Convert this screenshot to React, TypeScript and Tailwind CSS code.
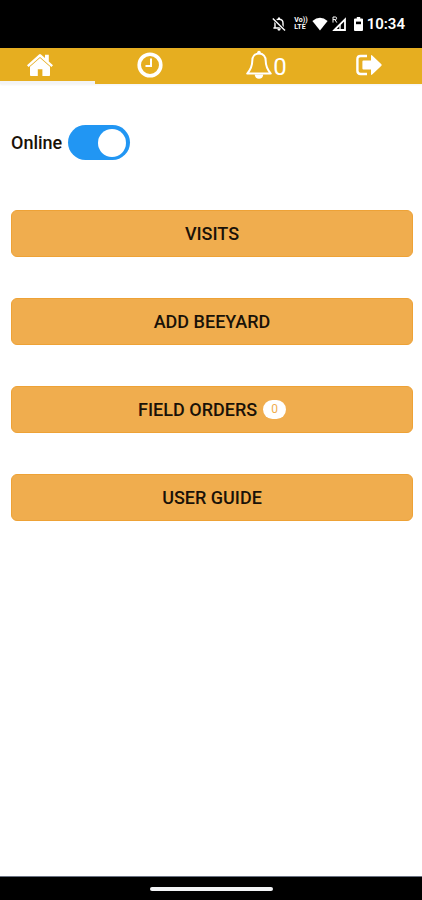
import React from "react";

type Tab = {
  label: string;
  icon: React.ReactNode;
  count?: number;
  className?: string;
};

type Action = {
  title: string;
  count?: number;
};

const HomeIcon = () => (
  <svg viewBox="0 0 26 24" className="w-[26px] h-6 fill-current">
    <path d="M12 1.4 Q13 0.4 14 1.4 L18 5 V1.8 H21.8 V8.4 L26 12.2 L24.4 14 L13 3.9 L1.6 14 L0 12.2 Z" />
    <path d="M13 5 L23 13.8 V22.2 Q23 23 22.2 23 H15.4 V16.2 H10.8 V23 H3.9 Q3 23 3 22.2 V13.8 Z" />
  </svg>
);

const ClockIcon = () => (
  <svg viewBox="0 0 26 26" className="size-[26px] fill-none stroke-current">
    <circle cx="13" cy="13" r="10.8" strokeWidth="3.6" />
    <path d="M14 6.5 V13.9 H8.5" strokeWidth="2" />
  </svg>
);

const BellIcon = () => (
  <svg viewBox="0 0 28 30" className="w-7 h-[30px]">
    <path
      d="M14 3.6 C9.6 3.6 7.3 6.8 7.3 10.8 C7.3 17 5.2 20.2 2.2 23.6 H25.8 C22.8 20.2 20.7 17 20.7 10.8 C20.7 6.8 18.4 3.6 14 3.6 Z"
      fill="none"
      stroke="currentColor"
      strokeWidth="2"
      strokeLinejoin="round"
    />
    <circle cx="14" cy="2.6" r="1.8" fill="currentColor" />
    <path d="M9.8 24.4 H18.2 C18.2 27.2 16.4 28.8 14 28.8 C11.6 28.8 9.8 27.2 9.8 24.4 Z" fill="currentColor" />
  </svg>
);

const LogOutIcon = () => (
  <svg viewBox="0 0 26 24" className="w-[26px] h-6">
    <path
      d="M11 3 H4.6 Q1.4 3 1.4 6.2 V17.8 Q1.4 21 4.6 21 H11"
      fill="none"
      stroke="currentColor"
      strokeWidth="2.4"
    />
    <path
      d="M7.4 7.6 H15 V2.8 Q15 1.4 16.2 2.5 L25.4 11.3 Q26 12 25.4 12.7 L16.2 21.5 Q15 22.6 15 21.2 V16.4 H7.4 Q6.4 16.4 6.4 15.4 V8.6 Q6.4 7.6 7.4 7.6 Z"
      fill="currentColor"
    />
  </svg>
);

const tabs: Tab[] = [
  { label: "Home", icon: <HomeIcon />, className: "pr-4 border-gray-100" },
  { label: "History", icon: <ClockIcon />, className: "border-transparent" },
  {
    label: "Notifications",
    icon: <BellIcon />,
    count: 0,
    className: "border-transparent",
  },
  {
    label: "Log out",
    icon: <LogOutIcon />,
    className: "pr-3 border-transparent",
  },
];

const actions: Action[] = [
  { title: "Visits" },
  { title: "Add Beeyard" },
  { title: "Field Orders", count: 0 },
  { title: "User Guide" },
];

const App = () => {
  return (
    <div className="min-h-screen flex flex-col bg-white text-[#1a1208] font-[Roboto,sans-serif]">
      <StatusBar />
      <nav className="grid grid-cols-[95fr_109fr_124fr_94fr] h-9 bg-[#e6ae20] text-white shadow-xs">
        {tabs.map((tab) => (
          <button
            key={tab.label}
            aria-label={tab.label}
            className={`flex items-center justify-center border-b-3 ${tab.className}`}
          >
            {tab.icon}
            {tab.count !== undefined && (
              <span className="pt-1 text-2xl leading-7">{tab.count}</span>
            )}
          </button>
        ))}
      </nav>
      <main className="flex-1 pl-[11px] pr-[9px] pt-[41px]">
        <div className="flex items-center gap-[6px]">
          <label htmlFor="online" className="text-lg font-medium">
            Online
          </label>
          <input
            id="online"
            type="checkbox"
            defaultChecked
            className="appearance-none flex items-center w-[62px] h-[35px] px-1 rounded-full bg-gray-300 checked:justify-end checked:bg-[#2196f3] before:size-7 before:rounded-full before:bg-white"
          />
        </div>
        <div className="flex flex-col gap-[41px] pt-[50px]">
          {actions.map((action) => (
            <ActionButton key={action.title} action={action} />
          ))}
        </div>
      </main>
      <footer className="flex items-center justify-center h-6 bg-black border-t border-gray-500">
        <div className="w-[123px] h-1 rounded-full bg-gray-100" />
      </footer>
    </div>
  );
};

export default App;

const ActionButton = ({ action }: { action: Action }) => {
  return (
    <button className="flex items-center justify-center gap-[6px] w-full h-[47px] rounded-md border border-[#eea236] bg-[#f0ad4e] text-lg font-medium uppercase">
      {action.title}
      {action.count !== undefined && (
        <span className="px-2 rounded-full bg-white text-[#f0ad4e] text-xs leading-[19px] font-normal">
          {action.count}
        </span>
      )}
    </button>
  );
};

const StatusBar = () => {
  return (
    <header className="flex items-center justify-end h-12 pr-[17px] bg-black text-white">
      <svg viewBox="0 0 14 16" className="w-[14px] h-4 mr-2">
        <path
          d="M3 11.8 V7 C3 4.6 4.8 3.2 7 3.2 C9.2 3.2 11 4.6 11 7 V11.8 M1.4 12 H12"
          fill="none"
          stroke="currentColor"
          strokeWidth="1.4"
        />
        <path d="M6 1.4 H8 V3.4 H6 Z M5.4 13 H8.6 Q8.6 14.8 7 14.8 Q5.4 14.8 5.4 13 Z" fill="currentColor" />
        <path d="M1 2.2 L13 14.4" stroke="#000" strokeWidth="3.2" />
        <path d="M0.8 2.4 L13 14.6" stroke="currentColor" strokeWidth="1.4" />
      </svg>
      <span className="mr-1 text-[7px] leading-[7px] font-bold">
        Vo))
        <br />
        LTE
      </span>
      <svg viewBox="0 0 16 14" className="w-4 h-[14px] mr-1 fill-current">
        <path d="M8 13.4 L0.4 4 Q8 -2.4 15.6 4 Z" />
      </svg>
      <svg viewBox="0 0 14 16" className="w-[14px] h-4 mr-2">
        <path d="M2.4 14 L13 3.4 V14 Z" fill="none" stroke="currentColor" strokeWidth="1.8" />
        <path d="M8 14 V8.4" stroke="currentColor" strokeWidth="1.4" />
        <path d="M1 6.6 V1 H3.4 Q4.6 1 4.6 2.3 Q4.6 3.6 3.4 3.6 H1 M3 3.6 L4.8 6.6" fill="none" stroke="currentColor" />
      </svg>
      <svg viewBox="0 0 9 14" className="w-[9px] h-[14px] mr-1">
        <path d="M2.8 0 H6.2 V1.4 H8 Q9 1.4 9 2.4 V13 Q9 14 8 14 H1 Q0 14 0 13 V2.4 Q0 1.4 1 1.4 H2.8 Z" fill="currentColor" />
        <path d="M2 4.6 H7 V7.2 H2 Z" fill="#000" />
      </svg>
      <time className="text-[15px] leading-5 font-semibold">10:34</time>
    </header>
  );
};
